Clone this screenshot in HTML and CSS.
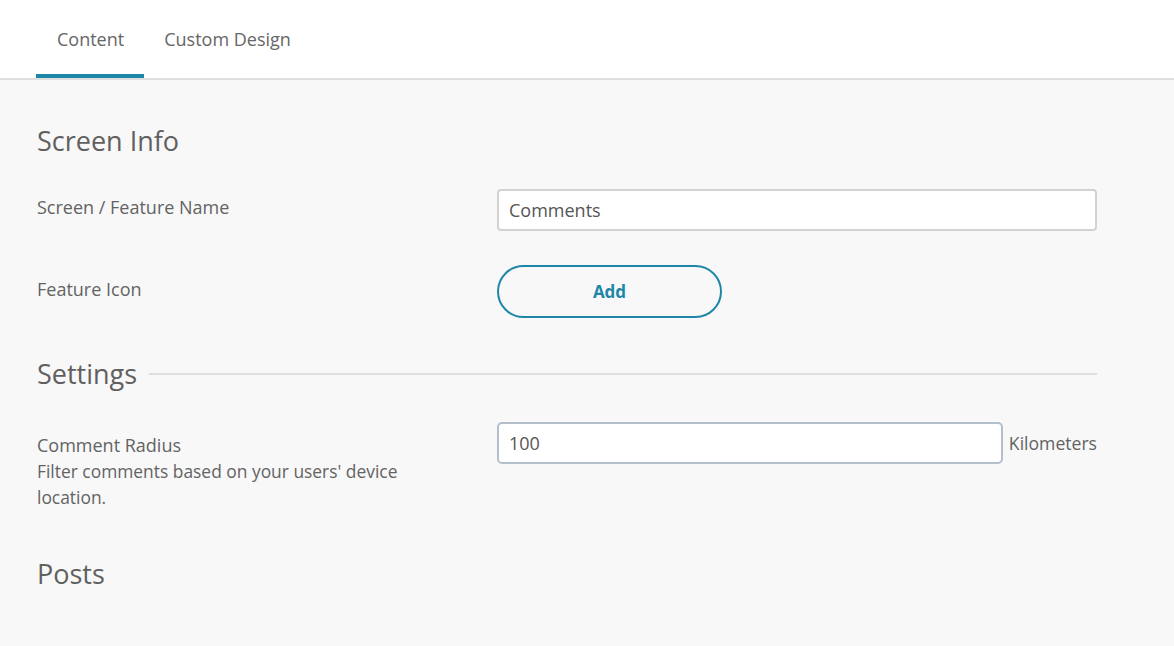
FILE: index.html
```html
<!DOCTYPE html>
<html lang="en">
<head>
  <meta charset="UTF-8" />
  <meta name="viewport" content="width=device-width, initial-scale=1.0"/>
  <title>Comments Screen</title>
  <link rel="stylesheet" href="styles.css">
</head>
<body>

  <!-- Tabs -->
  <div class="tabs">
    <div class="tab active">Content</div>
    <div class="tab">Custom Design</div>
  </div>

  <div class="content">
    <h2 class="section-title">Screen Info</h2>

    <div class="row">
      <div class="label">Screen / Feature Name</div>
      <div class="control">
        <input class="text-input" type="text" value="Comments" />
      </div>
    </div>

    <div class="row">
      <div class="label">Feature Icon</div>
      <div class="control">
        <button class="add-btn">Add</button>
      </div>
    </div>

    <div class="section-title divider">
      <span>Settings</span>
      <div class="line"></div>
    </div>

    <div class="row row-top">
      <div class="label">
        Comment Radius
        <div class="hint">Filter comments based on your users' device location.</div>
      </div>
      <div class="control">
        <input class="text-input radius-input" type="text" value="100" />
        <span class="unit">Kilometers</span>
      </div>
    </div>

    <h2 class="section-title posts">Posts</h2>
  </div>

</body>
</html>
```

FILE: styles.css
```css
body {
  font-family: 'Open Sans', sans-serif;
  margin: 0;
  background: #f8f8f8;
  color: #636363;
  height: 100vh;
}
.tabs {
  display: flex;
  background: #fff;
  height: 78px;
  padding-left: 36px;
  border-bottom: 2px solid #dedede;
}
.tab {
  font-size: 18px;
  padding: 4px 20px 0 21px;
  display: flex;
  align-items: center;
  height: 70px;
  border-bottom: 4px solid transparent;
  color: #666;
}
.tab + .tab {
  padding-left: 20px;
}
.tab.active {
  border-bottom-color: #1e87a8;
}
.content {
  padding: 43px 77px 0 37px;
}
.section-title {
  font-size: 27px;
  font-weight: 400;
  line-height: 36px;
  margin: 0 0 30px 0;
  color: #606060;
}
.divider {
  display: flex;
  align-items: center;
  gap: 12px;
  margin-top: 38px;
  margin-bottom: 30px;
}
.divider .line {
  flex: 1;
  height: 2px;
  background: #dedede;
}
.posts {
  margin-top: 46px;
}
.row {
  display: flex;
  align-items: center;
  margin-bottom: 34px;
}
.row .label {
  padding-bottom: 6px;
}
.row-top {
  align-items: flex-start;
  margin-bottom: 0;
}
.row-top .label {
  padding: 10px 0 0 0;
  width: 380px;
  margin-right: 80px;
}
.label {
  width: 460px;
  font-size: 18px;
  line-height: 26px;
}
.hint {
  font-size: 17.4px;
}
.control {
  flex: 1;
  display: flex;
  align-items: center;
}
.text-input {
  flex: 1;
  height: 42px;
  box-sizing: border-box;
  border: 2px solid #d2d2d2;
  border-radius: 4px;
  padding: 0 10px;
  font-family: 'Open Sans', sans-serif;
  font-size: 18px;
  color: #555;
  background: #fff;
  outline: none;
}
.radius-input {
  border-color: #b4bfcc;
  border-radius: 5px;
}
.unit {
  margin-left: 6px;
  font-size: 17.6px;
  line-height: 26px;
}
.add-btn {
  width: 225px;
  height: 53px;
  border: 2px solid #1e87a8;
  border-radius: 27px;
  background: transparent;
  color: #1e87a8;
  font-family: 'Open Sans', sans-serif;
  font-size: 17px;
  font-weight: 700;
  cursor: pointer;
}
```
